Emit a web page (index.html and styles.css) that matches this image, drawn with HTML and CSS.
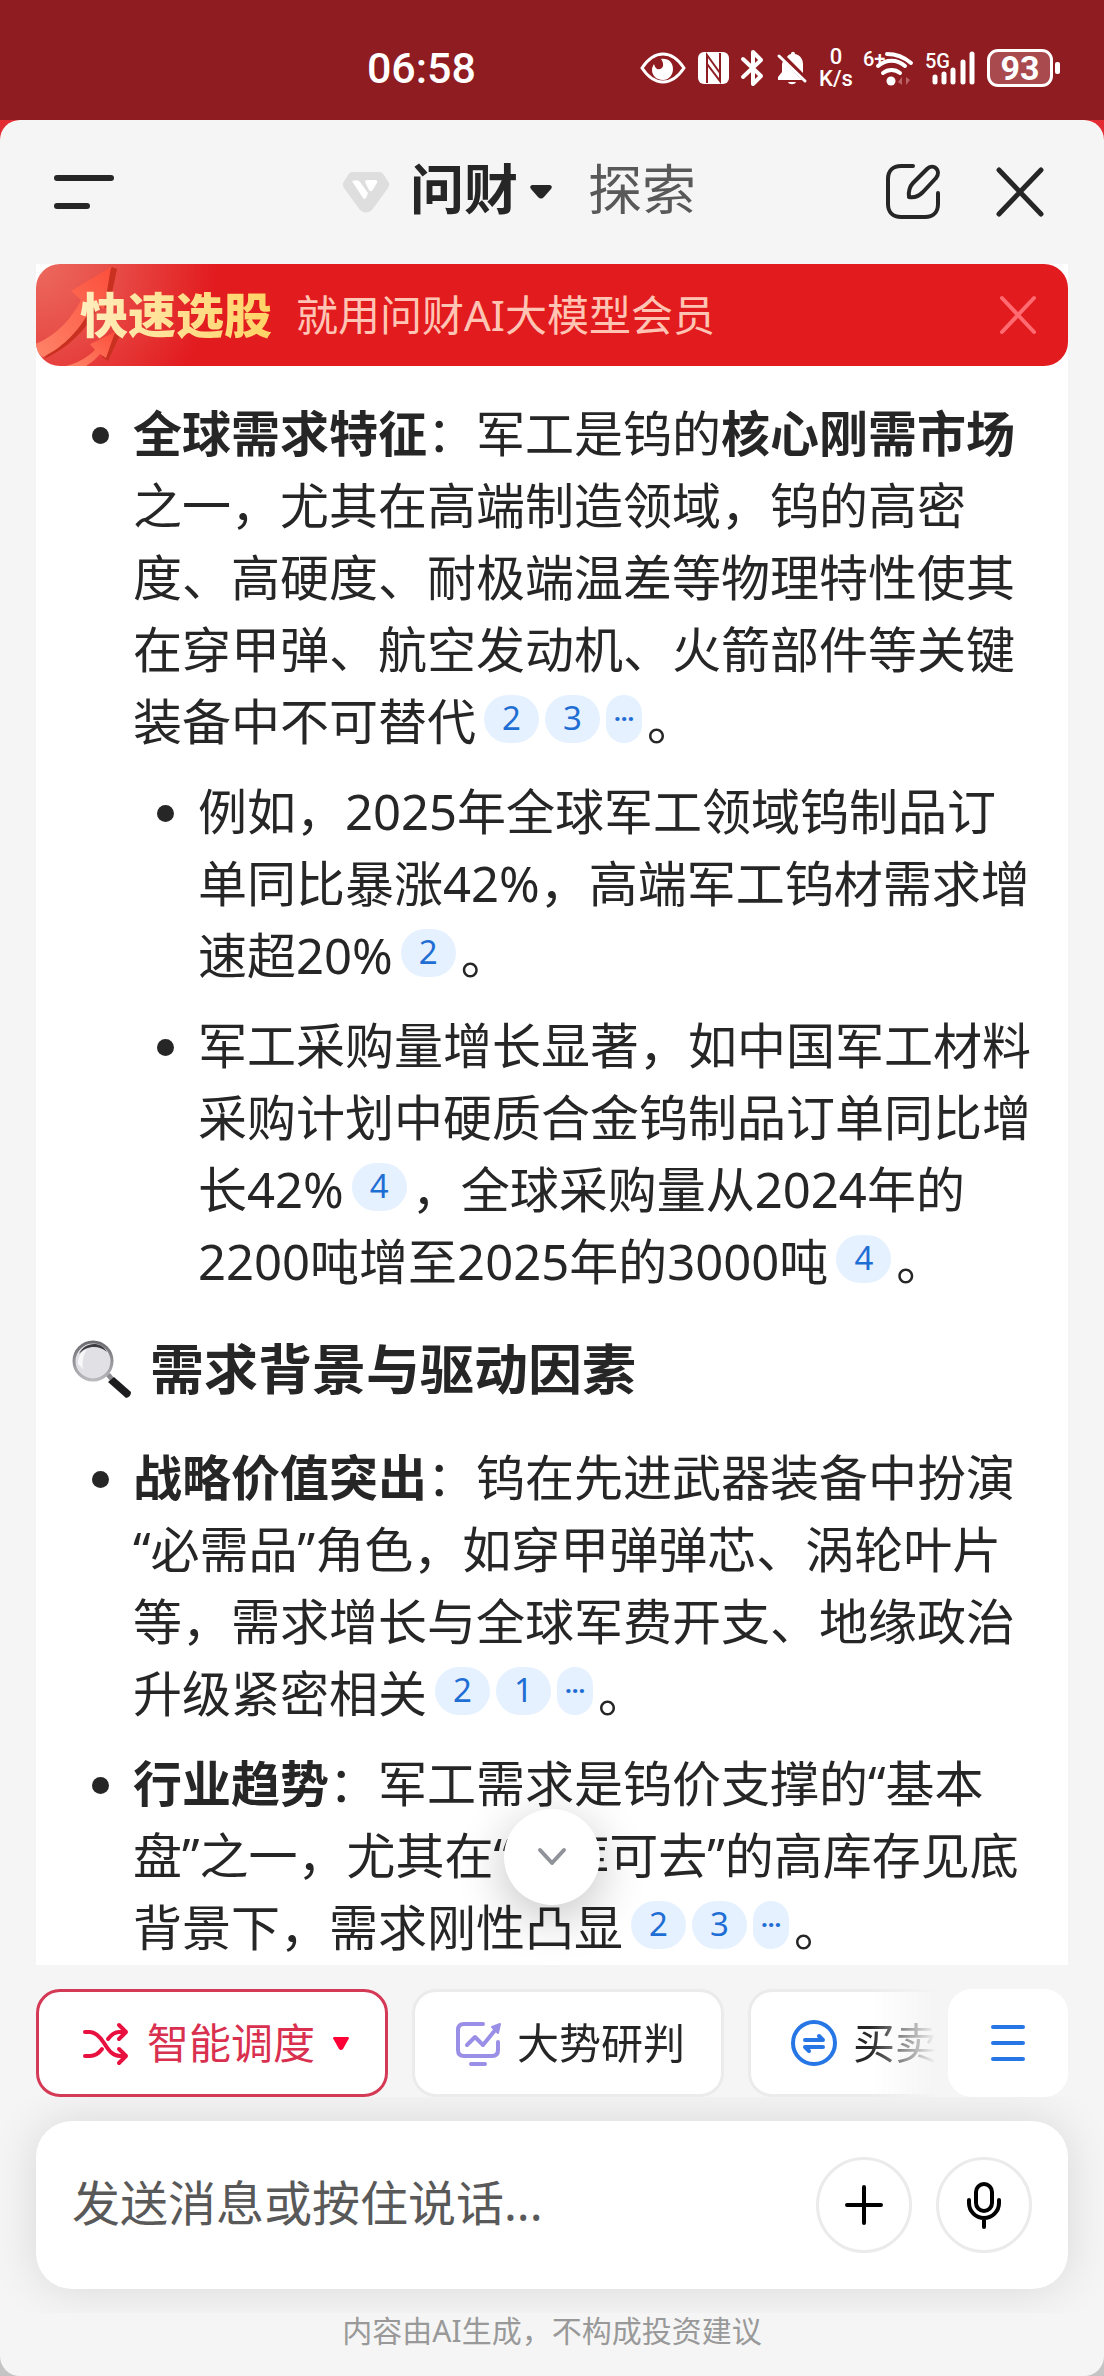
FILE: index.html
```html
<!DOCTYPE html>
<html lang="zh-CN">

<head>
    <meta charset="UTF-8">
    <meta name="viewport" content="width=device-width, initial-scale=1.0">
    <title>问财</title>
    <link rel="stylesheet" href="styles.css">
</head>

<body>
    <div class="status">
        <span class="status-time">06:58</span>
        <div class="status-icons">
            <svg width="46" height="36" viewBox="0 0 46 36">
                <path d="M2 18C8 9 15 4 23 4s15 5 21 14c-6 9-13 14-21 14S8 27 2 18z" fill="none" stroke="#fff" stroke-width="3" />
                <path d="M21 9c7-1 12 3 12 10 0 6-4 11-10 11s-11-4-11-10c0-3 1-4 2-6 1 4 3 6 6 5 4-1 4-6 1-10z" fill="#fff" />
            </svg>
            <svg width="31" height="36" viewBox="0 0 31 36">
                <rect x="0" y="2" width="31" height="32" rx="6" fill="#fff" />
                <path d="M9 33V5l13 18V12M22 3v28L9 14v10" fill="none" stroke="#8e1c20" stroke-width="2" />
            </svg>
            <svg width="24" height="36" viewBox="0 0 24 36">
                <path d="M2 9l18 17-8 8V2l8 8L2 27" fill="none" stroke="#fff" stroke-width="4" stroke-linejoin="round" stroke-linecap="round" />
            </svg>
            <svg width="30" height="36" viewBox="0 0 30 36">
                <path d="M6 11l19 19H1v-3l4-5v-8zM10 7c1-2 3-3 4-3 0-3 4-3 4 0 5 1 8 5 8 10v9z" fill="#fff" />
                <path d="M2 6l26 25" stroke="#fff" stroke-width="3" stroke-linecap="round" />
                <path d="M11 32h8c-1 3-7 3-8 0z" fill="#fff" />
            </svg>
            <div class="net-speed">
                <span>0</span>
                <span>K/s</span>
            </div>
            <svg width="48" height="36" viewBox="0 0 48 36">
                <text x="-2" y="16" class="tag">6+</text>
                <path d="M22 4c9 0 17 3 24 9M13 16c8-7 19-7 27 0M18 23c5-4 12-4 17 0" fill="none" stroke="#fff" stroke-width="4" stroke-linecap="round" />
                <circle cx="26" cy="31" r="4.500" fill="#fff" />
                <path d="M37 27v8l-4-3zM41 27v8l4-5z" fill="#b96466" />
            </svg>
            <svg width="50" height="36" viewBox="0 0 50 36">
                <text x="0" y="18" class="tag">5G</text>
                <path d="M10 27v5M19 24v8M28 20v12M38 12v20M47 4v28" stroke="#fff" stroke-width="5" stroke-linecap="round" />
            </svg>
            <div class="battery"><span>93</span></div>
        </div>
    </div>

    <div class="sheet-wrap">
        <main class="sheet">
            <header class="header">
                <button class="icon-btn" aria-label="菜单">
                    <svg width="60" height="36" viewBox="0 0 60 36">
                        <path d="M3 4h54M3 32h30" stroke="#262626" stroke-width="6" stroke-linecap="round" />
                    </svg>
                </button>
                <nav class="tabs">
                    <svg width="48" height="42" viewBox="0 0 48 42">
                        <path d="M10 1h28q2 0 4 3l5 8q1 2-1 5L30 39q-6 5-12 0L2 17q-2-3-1-5l5-8q2-3 4-3z" fill="#dedede" />
                        <path d="M10 10q6-2 8 1l8 11-2 5q-1 2-3 0zM25 9h9q2 1 1 3l-5 8q-2 1-3-1l-4-8q0-2 2-2z" fill="#fff" />
                    </svg>
                    <a href="#" class="tab active">问财</a>
                    <svg width="22" height="14" viewBox="0 0 22 14">
                        <path d="M2 0h18q3 1 1 4l-7 8q-3 3-6 0L1 4q-2-3 1-4z" fill="#262626" />
                    </svg>
                    <a href="#" class="tab">探索</a>
                </nav>
                <div class="header-right">
                    <button class="icon-btn" aria-label="新建">
                        <svg width="54" height="56" viewBox="0 0 54 56">
                            <path d="M27 2H15C7 2 2 7 2 15v25c0 8 5 13 13 13h24c8 0 13-5 13-13V29" fill="none" stroke="#262626" stroke-width="4" stroke-linecap="round" />
                            <path d="M23 33c-1-5 1-11 4-14L41 5c6-6 15 1 9 9L37 28c-4 4-9 6-14 5z" fill="none" stroke="#262626" stroke-width="4" stroke-linejoin="round" />
                        </svg>
                    </button>
                    <button class="icon-btn" aria-label="关闭">
                        <svg width="48" height="50" viewBox="0 0 48 50">
                            <path d="M3 3l42 44M45 3L3 47" stroke="#262626" stroke-width="5" stroke-linecap="round" />
                        </svg>
                    </button>
                </div>
            </header>

            <section class="chat">
                <div class="banner">
                    <svg class="banner-arrow" width="90" height="102" viewBox="0 0 90 102">
                        <defs>
                            <linearGradient id="arrow" x1="0" y1="1" x2="1" y2="0">
                                <stop offset="0" stop-color="#ff8468" />
                                <stop offset="1" stop-color="#fb4f3c" />
                            </linearGradient>
                        </defs>
                        <path d="M76 3l5 2-8 38-12 2C50 66 32 84 8 95z" fill="#c9301f" />
                        <path d="M0 80c22-10 36-26 45-44l-10-9L75 3l-7 42-11-5C46 64 28 83 7 93l-7-4z" fill="url(#arrow)" />
                        <path d="M80 68l4 3-12 26-6-4z" fill="#c9301f" />
                        <path d="M30 102c12-3 22-9 29-16l-5-6 25-12-9 26-6-4c-4 5-9 9-14 12z" fill="url(#arrow)" />
                    </svg>
                    <strong class="banner-title">快速选股</strong>
                    <span class="banner-text">就用问财AI大模型会员</span>
                    <button class="icon-btn" aria-label="关闭广告">
                        <svg width="36" height="38" viewBox="0 0 36 38">
                            <path d="M2 2l32 34M34 2L2 36" stroke="#ff6b70" stroke-width="4" stroke-linecap="round" />
                        </svg>
                    </button>
                </div>

                <article class="answer">
                    <ul>
                        <li>
                            <strong>全球需求特征</strong>：军工是钨的<strong>核心刚需市场</strong>之一，尤其在高端制造领域，钨的高密度、高硬度、耐极端温差等物理特性使其在穿甲弹、航空发动机、火箭部件等关键装备中不可替代<span class="refs"><a href="#">2</a><a href="#">3</a><a href="#" class="more">···</a></span>。
                            <ul>
                                <li>例如，2025年全球军工领域钨制品订单同比暴涨42%，高端军工钨材需求增速超20%<span class="refs"><a href="#">2</a></span>。</li>
                                <li>军工采购量增长显著，如中国军工材料采购计划中硬质合金钨制品订单同比增长42%<span class="refs"><a href="#">4</a></span>，全球采购量从2024年的2200吨增至2025年的3000吨<span class="refs"><a href="#">4</a></span>。</li>
                            </ul>
                        </li>
                    </ul>
                    <h3>
                        <svg width="60" height="60" viewBox="0 0 60 60">
                            <defs>
                                <linearGradient id="rim" x1="0" y1="0" x2="0" y2="1">
                                    <stop offset="0" stop-color="#6b6b70" />
                                    <stop offset="1" stop-color="#b9b9be" />
                                </linearGradient>
                            </defs>
                            <path d="M34 37l4-3 5 6-3 4z" fill="#8b8b90" />
                            <path d="M36 43l6-5 17 15q0 5-5 6z" fill="#1d1d1f" />
                            <circle cx="21" cy="22" r="19" fill="#e1e1e5" stroke="url(#rim)" stroke-width="3" />
                            <path d="M7 15C12 3 29 1 35 13 26 5 14 7 7 15z" fill="#3d3d42" />
                            <path d="M6 25c0-7 3-13 9-15-4 6-5 13-4 20z" fill="#f8f8fa" />
                        </svg>
                        需求背景与驱动因素
                    </h3>
                    <ul>
                        <li><strong>战略价值突出</strong>：钨在先进武器装备中扮演“必需品”角色，如穿甲弹弹芯、涡轮叶片等，需求增长与全球军费开支、地缘政治升级紧密相关<span class="refs"><a href="#">2</a><a href="#">1</a><a href="#" class="more">···</a></span>。</li>
                        <li><strong>行业趋势</strong>：军工需求是钨价支撑的“基本盘”之一，尤其在“无库可去”的高库存见底背景下，需求刚性凸显<span class="refs"><a href="#">2</a><a href="#">3</a><a href="#" class="more">···</a></span>。</li>
                    </ul>
                </article>

                <button class="scroll-down" aria-label="滚动到底部">
                    <svg width="30" height="20" viewBox="0 0 30 20">
                        <path d="M3 3l12 13L27 3" fill="none" stroke="#8f9299" stroke-width="4" stroke-linecap="round" stroke-linejoin="round" />
                    </svg>
                </button>
            </section>

            <div class="tools">
                <div class="chips">
                    <button class="chip selected">
                        <svg width="48" height="48" viewBox="0 0 48 48" fill="none" stroke="#e8103f" stroke-width="4" stroke-linecap="round" stroke-linejoin="round">
                            <path d="M4 13h5c6 0 10 5 14 11 5 8 9 13 16 13h6M4 37h5c5 0 9-3 12-7M27 20c3-4 6-7 11-7h7M38 6l7 7-7 7M38 30l7 7-7 7" />
                        </svg>
                        智能调度
                        <svg width="16" height="13" viewBox="0 0 16 13">
                            <path d="M1 0h14q2 1 0 3L10 12q-2 2-4 0L1 3q-2-2 0-3z" fill="#ff0036" />
                        </svg>
                    </button>
                    <button class="chip">
                        <svg width="48" height="48" viewBox="0 0 48 48" fill="none" stroke="#9a8fe6" stroke-width="4" stroke-linecap="round" stroke-linejoin="round">
                            <path d="M29 5H10q-6 0-6 6v20q0 6 6 6h28q6 0 6-6v-8M17 45h14M13 26l8-8 8 8L42 10" />
                            <path d="M38 8l8-3-2 9z" fill="#9a8fe6" stroke-width="2" />
                        </svg>
                        大势研判
                    </button>
                    <button class="chip">
                        <svg width="48" height="48" viewBox="0 0 48 48" fill="none" stroke="#2776e6" stroke-width="4" stroke-linecap="round" stroke-linejoin="round">
                            <circle cx="24" cy="24" r="21" />
                            <path d="M15 21h18l-4-4M33 28H15l4 4" />
                        </svg>
                        买卖
                    </button>
                </div>
                <button class="tools-menu" aria-label="全部工具">
                    <svg width="36" height="38" viewBox="0 0 36 38">
                        <path d="M3 3h30M3 19h30M3 35h30" stroke="#2776e6" stroke-width="4" stroke-linecap="round" />
                    </svg>
                </button>
            </div>

            <form class="composer-wrap">
                <div class="composer">
                    <input type="text" placeholder="发送消息或按住说话..." aria-label="发送消息">
                    <button type="button" class="round-btn" aria-label="添加">
                        <svg width="38" height="40" viewBox="0 0 38 40">
                            <path d="M19 2v36M2 20h34" stroke="#000" stroke-width="4" stroke-linecap="round" />
                        </svg>
                    </button>
                    <button type="button" class="round-btn" aria-label="语音">
                        <svg width="36" height="48" viewBox="0 0 36 48" fill="none" stroke="#000" stroke-width="4" stroke-linecap="round">
                            <rect x="10" y="3" width="16" height="27" rx="8" />
                            <path d="M3 19v3a15 15 0 0 0 30 0v-3M18 38v8" />
                        </svg>
                    </button>
                </div>
            </form>

            <footer class="note">内容由AI生成，不构成投资建议</footer>
        </main>
    </div>
</body>

</html>
```
FILE: styles.css
```css
* {
    box-sizing: border-box;
}

body {
    margin: 0;
    min-height: 100vh;
    display: flex;
    flex-direction: column;
    background-color: #f5f5f5;
    color: #262626;
    font-family: "Noto Sans", "Noto Sans CJK SC", sans-serif;
}

svg {
    display: block;
    flex: none;
    overflow: visible;
}

button {
    font-family: inherit;
    color: inherit;
    background: none;
    border: none;
    padding: 0;
}

a {
    color: inherit;
    text-decoration: none;
}

/* status bar */
.status {
    height: 120px;
    padding: 16px 44px 0 0;
    display: flex;
    align-items: center;
    justify-content: flex-end;
    gap: 164px;
    background-color: #8e1c20;
    color: #fff;
    font-family: Roboto, sans-serif;
}

.status-time {
    font-size: 43px;
    font-weight: 500;
}

.status-icons {
    display: flex;
    align-items: center;
    gap: 12px;
}

.net-speed {
    width: 34px;
    display: flex;
    flex-direction: column;
    align-items: center;
    font-size: 22px;
    line-height: 22px;
    font-weight: 500;
}

.tag {
    font-size: 20px;
    font-weight: 500;
    fill: #fff;
}

.battery {
    display: flex;
    align-items: center;
    gap: 2px;
}

.battery span {
    width: 66px;
    height: 38px;
    border: 3px solid #fff;
    border-radius: 11px;
    background-color: #a94a4e;
    font-size: 34px;
    line-height: 33px;
    font-weight: 700;
    text-align: center;
}

.battery::after {
    content: "";
    width: 5px;
    height: 12px;
    border-radius: 2px;
    background-color: #fff;
}

/* sheet */
.sheet-wrap {
    flex: 1;
    display: flex;
    background: linear-gradient(#e22b32 50%, #c4c4c4 50%);
}

.sheet {
    flex: 1;
    min-width: 0;
    display: flex;
    flex-direction: column;
    border-radius: 20px;
    background-color: #f5f5f5;
    overflow: hidden;
}

.header {
    height: 144px;
    padding: 0 60px 0 54px;
    display: flex;
    align-items: center;
    justify-content: space-between;
}

.tabs {
    display: flex;
    align-items: center;
    margin-left: 38px;
}

.tab {
    margin-left: 36px;
    padding-bottom: 6px;
    font-size: 54px;
    line-height: 72px;
    color: #595959;
}

.tab.active {
    margin: 0 12px 0 20px;
    font-weight: 700;
    color: #262626;
}

.header-right {
    display: flex;
    align-items: center;
    gap: 56px;
}

.chat {
    flex: 1;
    position: relative;
    margin: 0 36px;
    background-color: #fff;
}

.banner {
    position: relative;
    height: 102px;
    padding: 0 32px 0 44px;
    display: flex;
    align-items: center;
    border-radius: 24px;
    overflow: hidden;
    background: radial-gradient(circle at 0 0, #ec6a5e 0, #e8504a 70px, #e21b1f 180px);
}

.banner-arrow {
    position: absolute;
    left: 0;
    top: 0;
}

.banner-title {
    position: relative;
    font-size: 48px;
    line-height: 60px;
    font-weight: 900;
    background: linear-gradient(90deg, #ffeebf, #ffd264);
    background-clip: text;
    -webkit-background-clip: text;
    color: transparent;
}

.banner-text {
    flex: 1;
    margin-left: 24px;
    font-size: 42px;
    line-height: 60px;
    color: #ffc4b4;
}

/* answer text */
.answer {
    padding: 31px 36px 2px;
    font-size: 49px;
    line-height: 72px;
}

.answer ul {
    margin: 0;
    padding-left: 61px;
}

.answer li {
    list-style: disc;
}

.answer li + li,
.answer li ul {
    margin-top: 18px;
}

.answer li ul {
    padding-left: 65px;
}

.answer h3 {
    display: flex;
    align-items: center;
    gap: 18px;
    margin: 36px 0;
    font-size: 54px;
    line-height: 72px;
}

.refs {
    display: inline-flex;
    gap: 6px;
    margin: 0 5px 0 8px;
    vertical-align: 10px;
}

.refs a {
    width: 55px;
    height: 48px;
    border-radius: 24px;
    background-color: #e6f1ff;
    color: #1f6ed4;
    font-size: 33px;
    line-height: 46px;
    text-align: center;
}

.refs .more {
    width: 36px;
    font-size: 24px;
    font-weight: 700;
}

.scroll-down {
    position: absolute;
    left: calc(50% - 48px);
    bottom: 60px;
    width: 96px;
    height: 96px;
    display: grid;
    place-items: center;
    border-radius: 50%;
    background-color: #fff;
    box-shadow: 0 12px 48px rgba(0, 0, 0, 0.24);
}

/* tool chips */
.tools {
    display: flex;
    gap: 12px;
    padding: 24px 36px 0;
}

.chips {
    flex: 1;
    min-width: 0;
    display: flex;
    gap: 24px;
    overflow: hidden;
    -webkit-mask-image: linear-gradient(90deg, #000 calc(100% - 66px), transparent);
    mask-image: linear-gradient(90deg, #000 calc(100% - 66px), transparent);
}

.chip {
    flex: none;
    height: 108px;
    padding: 0 36px 0 39px;
    display: flex;
    align-items: center;
    gap: 15px;
    border: 3px solid #ebebeb;
    border-radius: 24px;
    background-color: #fff;
    font-size: 42px;
    line-height: 60px;
}

.chip.selected {
    padding-left: 42px;
    gap: 18px;
    border-color: #d43a55;
    color: #d9304f;
}

.tools-menu {
    width: 120px;
    height: 108px;
    display: grid;
    place-items: center;
    border-radius: 24px;
    background-color: #fff;
}

/* message box */
.composer-wrap {
    padding: 24px 36px;
    overflow: hidden;
}

.composer {
    height: 168px;
    padding: 0 36px;
    display: flex;
    align-items: center;
    gap: 24px;
    border-radius: 36px;
    background-color: #fff;
    box-shadow: 0 0 48px rgba(0, 0, 0, 0.12);
}

.composer input {
    flex: 1;
    min-width: 0;
    height: 72px;
    border: none;
    outline: none;
    padding: 0 0 6px;
    background: none;
    font-family: inherit;
    font-size: 48px;
    line-height: 66px;
    color: #262626;
}

.composer input::placeholder {
    color: #595959;
    opacity: 1;
}

.round-btn {
    width: 96px;
    height: 96px;
    display: grid;
    place-items: center;
    border: 3px solid #ebebeb;
    border-radius: 50%;
}

.note {
    height: 63px;
    font-size: 30px;
    line-height: 36px;
    text-align: center;
    color: #999;
}
```
